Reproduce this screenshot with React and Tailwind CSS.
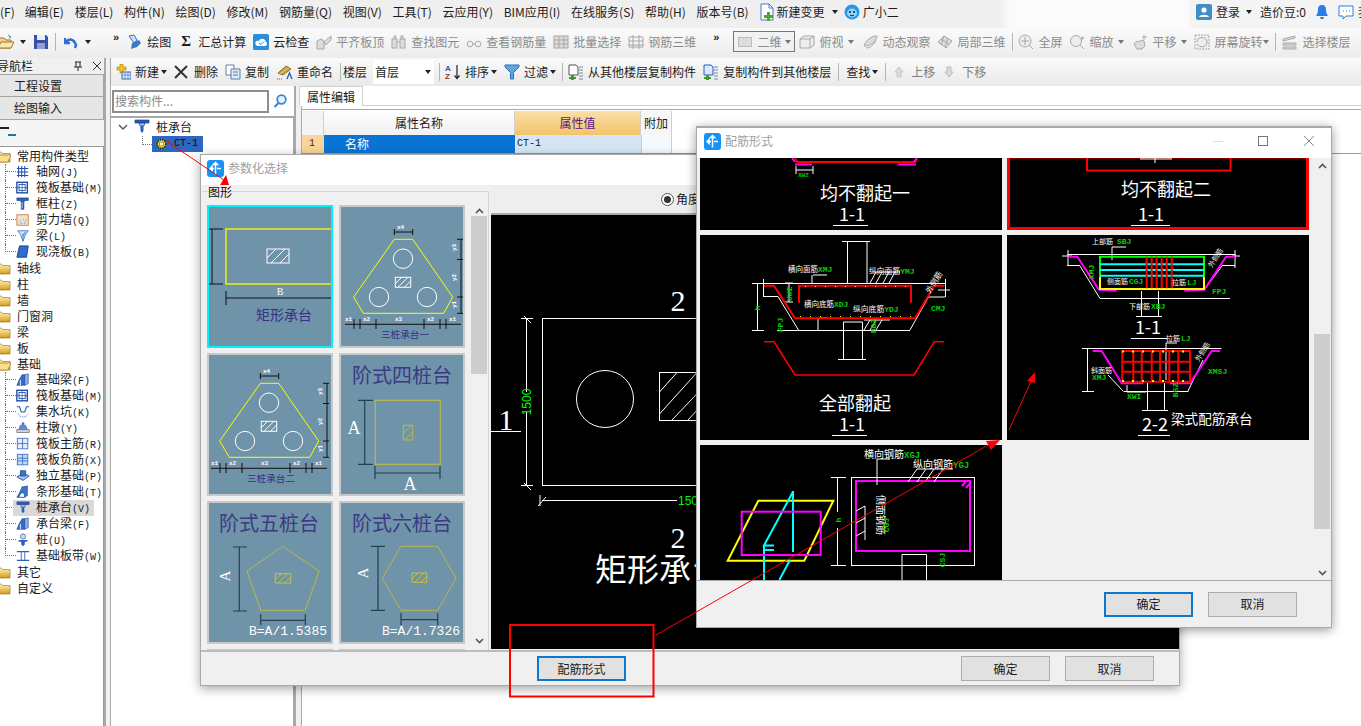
import React from "react";

const B = "#1f4fa8";
const Ico = ({ w = 16, h = 16, vb, children, className = "" }) => (
  <svg width={w} height={h} viewBox={vb || `0 0 ${w} ${h}`} className={`shrink-0 ${className}`}>{children}</svg>
);

/* ---------- small tree icons ---------- */
const TreeIcons = {
  grid: <g stroke={B} strokeWidth="1.2" fill="none"><path d="M3 1v13M6.5 1v13M10 1v13M1 4h13M1 8h13M1 12h13" /></g>,
  raft: <g fill="none" stroke={B}><rect x="1" y="1.5" width="12" height="12" strokeWidth="1.6" /><rect x="3.5" y="4" width="7" height="7" strokeWidth="1" /><path d="M7 1.5v12M1 7.5h12" strokeWidth=".8" /></g>,
  col: <g><path d="M1 1h13v3H11l-2 1v9H6V5L4 4H1z" fill="#2a5fc0" stroke="#123a86" strokeWidth=".7" /><path d="M7 6v7" stroke="#bcd3f5" /></g>,
  wall: <g><rect x="1" y="2" width="13" height="12" fill="#e8e4dc" stroke="#d9762b" /><path d="M5 9h1M8 7h1M10 10h1M6 12h1M9 12h1M4 11h1M11 8h1" stroke="#777" /></g>,
  beam: <g fill="none" stroke="#3a78c8"><path d="M2 2h12l-3 4-3 8-3-8z" fill="#d6e6f9" /><path d="M8 5v9M11 3l-3 5" /></g>,
  slab: <path d="M4 1h10l-2 13H1z" fill="#2f6cd0" stroke="#133f8c" />,
  fbeam: <g><path d="M1 14l3-7 3-5h3v12z" fill="#2f6cd0" stroke="#133f8c" strokeWidth=".7" /><path d="M10 2l4-1v11l-4 2z" fill="#8eb5ea" stroke="#133f8c" strokeWidth=".7" /><path d="M5 14V8" stroke="#fff" /></g>,
  pit: <g fill="none" stroke="#2a5fc0"><path d="M1 2l3 0 2 6h4l2-6 3 0" strokeWidth="1.3" /><path d="M2 10c3 5 9 5 12 0" strokeWidth="1" strokeDasharray="1 1" /></g>,
  pier: <g><path d="M7 2h2v3h2l2 5H3l2-5h2z" fill="#5f8bd0" stroke="#2a4f8c" strokeWidth=".7" /><rect x="1" y="10" width="14" height="3" fill="#ddd" stroke="#777" /></g>,
  main: <g fill="none"><rect x="1.5" y="1.5" width="12" height="12" fill="#e6effa" stroke="#3a6fc8" /><path d="M2 7.5h11M7.5 2v11" stroke="#3a6fc8" /></g>,
  neg: <g fill="none"><rect x="1.5" y="1.5" width="12" height="12" fill="#c6daf4" stroke="#3a6fc8" /><path d="M2 6h11M2 9h11M7.5 2v11" stroke="#3a6fc8" /></g>,
  iso: <g><path d="M1 9l7-4 7 3-7 5z" fill="#a9c7ef" stroke="#1f4fa8" /><path d="M5 2h6v6H5z" fill="#3a78d0" stroke="#1f4fa8" /></g>,
  strip: <g><path d="M1 14l3-5 3-7h2l4-1v11l-3 2z" fill="#3a78d0" stroke="#133f8c" strokeWidth=".7" /><path d="M3 14l3-5h3l1 5z" fill="#fff" stroke="#133f8c" strokeWidth=".7" /></g>,
  cap: <g><path d="M1 1h14v3H1z" fill="#2a5fc0" stroke="#0f2f70" strokeWidth=".6" /><path d="M5 4h6l-1 3H6z" fill="#9dbdea" stroke="#0f2f70" strokeWidth=".6" /><path d="M6.5 7h3v5l-1.5 2-1.5-2z" fill="#2a5fc0" /></g>,
  pile: <g fill="#2a5fc0"><circle cx="8" cy="4" r="3" stroke="#0f2f70" strokeWidth=".6" fill="#c6daf4" /><path d="M3 8h10v2H3zM6 10h4v3l-2 2-2-2z" /></g>,
  band: <g fill="none" stroke="#2a5fc0"><path d="M1 3h14M1 13h14" strokeWidth="1.5" /><path d="M6 3v10M10 3v10" /></g>,
  gear: <g><circle cx="7" cy="7" r="4.6" fill="#ffe500" stroke="#222" strokeWidth="1.6" strokeDasharray="1.4 1" /><rect x="5" y="5" width="4" height="4" fill="#fff8c0" stroke="#555" strokeWidth=".6" /></g>,
};

const Mono = ({ children }) => <span className="font-['Liberation_Mono',monospace] text-[10px]">{children}</span>;

const Folder = ({ open }) => (
  <svg width="16" height="14" viewBox="0 0 16 14" className="shrink-0">
    <defs><linearGradient id="fg" x1="0" y1="0" x2="0" y2="1"><stop offset="0" stopColor="#fff3b8" /><stop offset="1" stopColor="#d99b14" /></linearGradient></defs>
    <path d="M0 3h6l1.5 1.5H15v8.5H0z" fill="url(#fg)" stroke="#8f6a1a" strokeWidth=".6" />
    {open && <path d="M3 6h13l-3 7H0z" fill="#fbe08a" stroke="#8f6a1a" strokeWidth=".6" />}
  </svg>
);

const FolderRow = ({ label, open }) => (
  <div className="flex items-center h-4 gap-[6px] ml-[-5px]"><Folder open={open} /><span>{label}</span></div>
);

const ChildRow = ({ icon, label, key_, last, hi }) => (
  <div className="flex h-4 ml-[5px]">
    <div className={`w-[11px] shrink-0 border-l border-dotted border-[#777] ${last ? "h-2 border-b" : "h-4"}`}>
      {!last && <div className="h-2 border-b border-dotted border-[#777]" />}
    </div>
    <div className={`flex items-center gap-[6px] ${hi ? "bg-[#d9d9d9] w-[81px] ml-[-3px] pl-[3px]" : ""}`}>
      <Ico w={14} h={14} vb="0 0 16 16">{TreeIcons[icon]}</Ico>
      <span className="whitespace-nowrap">{label}{key_ && <Mono>({key_})</Mono>}</span>
    </div>
  </div>
);

/* ---------- toolbar helpers ---------- */
const Caret = ({ className = "", color = "border-t-[#222]" }) => (
  <div className={`w-0 h-0 shrink-0 border-x-[3.5px] border-x-transparent border-t-[4px] ${color} ${className}`} />
);
const Sep = ({ className = "" }) => <div className={`w-px h-[18px] bg-[#b5b5b5] shrink-0 ${className}`} />;
const Tool = ({ icon, label, gray, className = "" }) => (
  <div className={`flex items-center gap-[4px] shrink-0 whitespace-nowrap ${gray ? "text-[#8b8b8b]" : "text-[#1d1d1d]"} ${className}`}>
    {icon}<span>{label}</span>
  </div>
);
const Gray = ({ d, w = 16, children }) => (
  <Ico w={w} h={16} vb={`0 0 ${w} 16`}>
    <g fill="#dcdcdc" stroke="#a8a8a8" strokeWidth="1">{d ? <path d={d} /> : children}</g>
  </Ico>
);
const Chevrons = ({ className = "" }) => <span className={`font-['Liberation_Sans',sans-serif] text-[11px] font-bold leading-none mt-[-8px] text-[#222] shrink-0 ${className}`}>»</span>;

const MenuBar = () => {
  const items = ["编辑(E)", "楼层(L)", "构件(N)", "绘图(D)", "修改(M)", "钢筋量(Q)", "视图(V)", "工具(T)", "云应用(Y)", "BIM应用(I)", "在线服务(S)", "帮助(H)", "版本号(B)"];
  return (
    <div className="h-7 pb-[5px] flex items-center bg-[linear-gradient(90deg,#efefef_0,#efefef_1000px,#fbfbfb_1010px,#fbfbfb_1188px,#f4f4f4_1190px)] whitespace-nowrap text-[#1c1c1c]">
      <span className="ml-[-24px]">文件(F)</span>
      <div className="flex gap-[10.7px] ml-[10px]">{items.map((t) => <span key={t}>{t}</span>)}</div>
      <Ico w={16} h={18} vb="0 0 16 18" className="ml-[10px]">
        <path d="M2 1h8l4 4v12H2z" fill="#fff" stroke="#3c7fc2" /><path d="M10 1v4h4" fill="none" stroke="#3c7fc2" />
        <path d="M8 9h3v3h3v3h-3v3H8v-3H5v-3h3z" fill="#4ea52f" />
      </Ico>
      <span className="ml-[2px]">新建变更</span>
      <Caret className="ml-[7px]" />
      <Ico w={16} h={16} className="ml-[6px]">
        <circle cx="8" cy="8" r="7.5" fill="#2a97e8" /><ellipse cx="8" cy="9" rx="5" ry="4.4" fill="#8fd3ff" />
        <circle cx="6" cy="8" r="1" fill="#124" /><circle cx="10" cy="8" r="1" fill="#124" /><path d="M6 11c1 1 3 1 4 0" stroke="#124" fill="none" />
      </Ico>
      <span className="ml-[3px]">广小二</span>
      <div className="flex-1" />
      <Ico w={16} h={16}>
        <rect width="16" height="16" rx="2" fill="#3f8fc6" /><circle cx="8" cy="6" r="2.6" fill="#fff" /><path d="M3 13c1-3 9-3 10 0z" fill="#fff" />
      </Ico>
      <span className="ml-[4px]">登录</span>
      <Caret className="ml-[6px]" />
      <span className="ml-[8px]">造价豆:0</span>
      <Ico w={12} h={16} className="ml-[10px]">
        <path d="M6 1c3 0 4 2 4 5 0 3 1 4 2 6H0c1-2 2-3 2-6 0-3 1-5 4-5z" fill="#2b7de9" /><path d="M4 13c0 3 4 3 4 0z" fill="#2b7de9" />
      </Ico>
      <Ico w={16} h={16} className="ml-[10px]">
        <path d="M1 2h14v10H8l-3 3v-3H1z" fill="#fff" stroke="#2b7de9" /><path d="M5 7h1M8 7h1M11 7h1" stroke="#2b7de9" />
      </Ico>
      <span className="ml-[4px] mr-[-9px]">我</span>
    </div>
  );
};

const Toolbar1 = () => (
  <div className="h-[30px] pb-[3px] flex items-center bg-[linear-gradient(#fbfbfb,#ececec)] overflow-hidden">
    <Ico w={16} h={16} className="ml-[-2px]">
      <path d="M0 4h6l2 2h5v8H0z" fill="#efd488" stroke="#9a7a2a" /><path d="M3 8h13l-3 6H0z" fill="#f9e8b0" stroke="#9a7a2a" /><path d="M10 1l3 2-2 1" fill="none" stroke="#3a8ad0" />
    </Ico>
    <Caret className="ml-[6px]" />
    <Ico w={14} h={14} vb="0 0 14 14" className="ml-[8px]">
      <path d="M0 0h12l2 2v12H0z" fill="#3a4fa8" /><rect x="3" y="0" width="8" height="5" fill="#e8edf8" /><rect x="3" y="8" width="8" height="6" fill="#8f9fd4" />
    </Ico>
    <Sep className="ml-[7px] h-6" />
    <Ico w={14} h={14} className="ml-[8px]">
      <path d="M1 3v5h5M2 7c3-4 8-3 10 3l-1 3" fill="none" stroke="#2b6fd0" strokeWidth="2.4" />
    </Ico>
    <Caret className="ml-[7px]" />
    <Chevrons className="ml-[22px]" />
    <div className="ml-[8px] flex items-center gap-[7px]">
      <Tool icon={<Ico><path d="M2 2l5-1 3 5-3 3z" fill="#cfe0f5" stroke="#3a6fb0" /><path d="M5 9l7-3 2 3-4 4-6 2z" fill="#3a78c8" /></Ico>} label="绘图" />
      <Tool className="ml-[3px]" icon={<span className="w-[13px] font-['Liberation_Serif',serif] font-bold text-[15px] leading-none">Σ</span>} label="汇总计算" />
      <Tool icon={<Ico><rect width="16" height="16" rx="1.5" fill="#2d8fdc" /><path d="M3 11c-2-3 1-5 3-4 1-3 6-3 7 1 2 1 1 4-1 4H4z" fill="#fff" /><path d="M6 9l2 1.5 3-3" stroke="#2d8fdc" fill="none" /></Ico>} label="云检查" />
      <Tool gray icon={<Gray d="M1 15V7l4-2 3 2v8zM8 8l7-6v4l-5 5z" />} label="平齐板顶" />
      <Tool gray icon={<Gray><rect x="1" y="5" width="5" height="9" /><rect x="9" y="5" width="5" height="9" /><path d="M3 5V2h2v3M10 5V2h2v3M6 8h3" /></Gray>} label="查找图元" />
      <Tool gray icon={<Gray><circle cx="4" cy="10" r="2.8" fill="none" /><circle cx="12" cy="10" r="2.8" fill="none" /><path d="M7 10h2" /></Gray>} label="查看钢筋量" />
      <Tool gray icon={<Gray><rect x="1" y="2" width="14" height="12" /><path d="M1 6h14M1 10h14M6 2v12M11 2v12" fill="none" /></Gray>} label="批量选择" />
      <Tool gray icon={<Gray><path d="M1 3h14v10H1zM1 7h14M5 1v14M11 1v14M1 11h14" fill="none" /></Gray>} label="钢筋三维" />
    </div>
    <Chevrons className="ml-[17px]" />
    <div className="ml-[14px] w-[62px] h-[21px] border border-[#777] flex items-center pl-[2px] bg-[#f2f2f2] shrink-0">
      <div className="w-[14px] h-[10px] bg-[#dcdcdc] border border-[#bbb] ml-[2px]" />
      <span className="ml-[5px] text-[#8b8b8b]">二维</span>
      <Caret className="ml-[4px]" color="border-t-[#777]" />
    </div>
    <div className="ml-[4px] flex items-center">
      <Tool gray icon={<Gray><path d="M1 5l4-3h10v9l-4 3H1z" fill="#eee" /><path d="M1 5h10v9M11 5l4-3" fill="none" /></Gray>} label="俯视" />
      <Caret className="ml-[5px]" color="border-t-[#777]" />
      <Tool gray className="ml-[8px]" icon={<Gray><path d="M2 12C4 6 9 2 15 2c-1 6-6 10-13 10z" /><path d="M4 14c4 0 8-3 10-8" fill="none" /></Gray>} label="动态观察" />
      <Tool gray className="ml-[7px]" icon={<Gray><path d="M1 8l6-6 8 5-6 7zM4 5l8 5M7 2l-3 9M11 4l-3 9" /></Gray>} label="局部三维" />
      <Sep className="ml-[7px]" />
      <Tool gray className="ml-[5px]" icon={<Gray><circle cx="7" cy="7" r="6" fill="#eee" /><path d="M7 3v8M3 7h8M11 11l4 4" fill="none" /></Gray>} label="全屏" />
      <Tool gray className="ml-[7px]" icon={<Gray><circle cx="7" cy="7" r="5.5" fill="#eee" /><path d="M11 11l4 4M12 4h3M13.500 2.500v3" fill="none" /></Gray>} label="缩放" />
      <Caret className="ml-[5px]" color="border-t-[#777]" />
      <Tool gray className="ml-[8px]" icon={<Gray><path d="M2 10l3-3 2 1 2-2 3 1 1 5-3 3H5zM12 1v5M10 3h5" /></Gray>} label="平移" />
      <Caret className="ml-[5px]" color="border-t-[#777]" />
      <Tool gray className="ml-[7px]" icon={<Gray><rect x="1" y="1" width="14" height="14" fill="#eee" strokeDasharray="2 1" /><path d="M3 8c0-6 10-6 10 0M13 8c0 6-8 6-10 2" fill="none" /></Gray>} label="屏幕旋转" />
      <Caret className="ml-px" color="border-t-[#777]" />
      <Sep className="ml-[6px]" />
      <Tool gray className="ml-[6px]" icon={<Gray><path d="M1 5l12-3v2L1 7zM1 9h13v2H1zM1 13h13v2H1z" /></Gray>} label="选择楼层" />
    </div>
  </div>
);

const Toolbar2 = () => (
  <div className="h-7 flex items-center bg-[linear-gradient(#fafafa,#e9e9e9)] overflow-hidden pl-[4px] text-[#1d1d1d]">
    <Tool icon={<Ico><path d="M5 0h3v3h3v3H8v3H5V6H2V3h3z" fill="#f2c21a" stroke="#a07c10" strokeWidth=".6" /><rect x="7" y="8" width="9" height="7" fill="#dce8f6" stroke="#3a6fb0" /><path d="M7 11h9M10 8v7M13 8v7" stroke="#3a6fb0" strokeWidth=".6" /></Ico>} label="新建" />
    <Caret className="ml-[2px]" />
    <Tool className="ml-[7px]" icon={<Ico w={14} h={14}><path d="M1 1l12 12M13 1L1 13" stroke="#333" strokeWidth="2" /></Ico>} label="" />
    <span className="ml-[2px]">删除</span>
    <Tool className="ml-[7px]" icon={<Ico><path d="M1 1h8v10H1z" fill="#fff" stroke="#5f7fa8" /><path d="M6 5h9v10H6z" fill="#dce8f6" stroke="#5f7fa8" /><path d="M8 8h5M8 11h5" stroke="#5f7fa8" /></Ico>} label="复制" />
    <Tool className="ml-[7px]" icon={<Ico w={17} h={16}><path d="M2 9l8-7 5 3-8 6z" fill="#e5c46a" stroke="#8a6a20" /><path d="M4 8l8-5M6 10l7-5" stroke="#8a6a20" strokeWidth=".7" /><path d="M11 15l2.500-6 2.500 6" fill="none" stroke="#2b5fb0" strokeWidth="1.4" /><path d="M1 15h6" stroke="#666" strokeDasharray="1 1" /></Ico>} label="重命名" />
    <Sep className="ml-[7px]" />
    <span className="ml-[2px]">楼层</span>
    <div className="ml-[6px] w-[61px] h-6 bg-white flex items-center justify-between pl-[2px] pr-[3px] shrink-0">
      <span>首层</span><Caret />
    </div>
    <Sep className="ml-[5px]" />
    <Tool className="ml-[5px]" icon={<Ico><text x="0" y="7" fontSize="8" fontFamily="Liberation Sans" fontWeight="700" fill="#2b5fb0">A</text><text x="0" y="15" fontSize="8" fontFamily="Liberation Sans" fontWeight="700" fill="#a03030">Z</text><path d="M12 1v13M9.500 11.500l2.500 3 2.500-3" fill="none" stroke="#222" strokeWidth="1.200" /></Ico>} label="排序" />
    <Caret className="ml-[2px]" />
    <Tool className="ml-[7px]" icon={<Ico><path d="M1 1h14v2L9.500 8.500V15h-3V8.500L1 3z" fill="#5fa8e8" stroke="#2b6fb0" /></Ico>} label="过滤" />
    <Caret className="ml-[2px]" />
    <Sep className="ml-[6px]" />
    <Tool className="ml-[5px]" icon={<Ico><path d="M1 1h7l2 2v8H1z" fill="#fff" stroke="#555" /><path d="M11 3h4M11 6h4M11 9h4M11 12h4M11 15h4" stroke="#6a8ab0" /><path d="M3 11h3v2h2v2H6v1H3v-1H1v-2h2z" fill="#3c9a2f" /></Ico>} label="从其他楼层复制构件" />
    <Tool className="ml-[7px]" icon={<Ico><path d="M1 1h7l2 2v8H1z" fill="#dce8ff" stroke="#2b5fb0" /><path d="M11 3h4M11 6h4M11 9h4M11 12h4M11 15h4" stroke="#6a8ab0" /><path d="M3 11h3v2h2v2H6v1H3v-1H1v-2h2z" fill="#3c9a2f" /></Ico>} label="复制构件到其他楼层" />
    <Sep className="ml-[7px]" />
    <span className="ml-[7px]">查找</span>
    <Caret className="ml-[2px]" />
    <Sep className="ml-[7px]" />
    <Ico w={10} h={12} className="ml-[8px]"><path d="M5 1l4 5H7v5H3V6H1z" fill="#dcdcdc" stroke="#c4c4c4" /></Ico>
    <span className="ml-[7px] text-[#7d7d7d]">上移</span>
    <Ico w={10} h={12} className="ml-[9px]"><path d="M5 11l4-5H7V1H3v5H1z" fill="#dcdcdc" stroke="#bbb" /></Ico>
    <span className="ml-[8px] text-[#7d7d7d]">下移</span>
  </div>
);

const LeftNav = () => (
  <div className="w-[104px] shrink-0 flex flex-col bg-white overflow-hidden">
    <div className="h-4 flex items-center bg-[#f0f0f0] whitespace-nowrap">
      <span className="ml-[-3px] flex-1">导航栏</span>
      <Ico w={10} h={10} className="mr-[9px]"><path d="M2 1h6M3 1v5M7 1v5M1 6h8M5 6v4" stroke="#222" fill="none" /></Ico>
      <Ico w={10} h={10} className="mr-[2px]"><path d="M1 1l8 8M9 1L1 9" stroke="#333" fill="none" /></Ico>
    </div>
    <div className="h-[23px] bg-[#e6e6e6] border border-[#a4a4a4] border-l-0 flex items-center pl-[14px] shrink-0">工程设置</div>
    <div className="h-[23px] bg-[#e6e6e6] border border-[#a4a4a4] border-t-0 border-l-0 flex items-center pl-[14px] shrink-0">绘图输入</div>
    <div className="h-[26px] bg-[#f5f5f5] shrink-0 flex items-center pb-[2px]">
      <Ico w={16} h={12}><path d="M0 2h9" stroke="#222" strokeWidth="2" /><path d="M8 9h8" stroke="#167f86" strokeWidth="2" /></Ico>
    </div>
    <div className="flex-1 border-r border-t border-[#9a9a9a] pt-[1px]">
      <FolderRow label="常用构件类型" open />
      <ChildRow icon="grid" label="轴网" key_="J" />
      <ChildRow icon="raft" label="筏板基础" key_="M" />
      <ChildRow icon="col" label="框柱" key_="Z" />
      <ChildRow icon="wall" label="剪力墙" key_="Q" />
      <ChildRow icon="beam" label="梁" key_="L" />
      <ChildRow icon="slab" label="现浇板" key_="B" last />
      <FolderRow label="轴线" />
      <FolderRow label="柱" />
      <FolderRow label="墙" />
      <FolderRow label="门窗洞" />
      <FolderRow label="梁" />
      <FolderRow label="板" />
      <FolderRow label="基础" open />
      <ChildRow icon="fbeam" label="基础梁" key_="F" />
      <ChildRow icon="raft" label="筏板基础" key_="M" />
      <ChildRow icon="pit" label="集水坑" key_="K" />
      <ChildRow icon="pier" label="柱墩" key_="Y" />
      <ChildRow icon="main" label="筏板主筋" key_="R" />
      <ChildRow icon="neg" label="筏板负筋" key_="X" />
      <ChildRow icon="iso" label="独立基础" key_="P" />
      <ChildRow icon="strip" label="条形基础" key_="T" />
      <ChildRow icon="cap" label="桩承台" key_="V" hi />
      <ChildRow icon="fbeam" label="承台梁" key_="F" />
      <ChildRow icon="pile" label="桩" key_="U" />
      <ChildRow icon="band" label="基础板带" key_="W" last />
      <FolderRow label="其它" />
      <FolderRow label="自定义" />
    </div>
  </div>
);

const Splitter = ({ className = "" }) => <div className={`shrink-0 bg-[#f0f0f0] border-l-2 border-r border-[#a9a9a9] ${className}`} />;

const TreePane = () => (
  <div className="w-[183px] shrink-0 flex flex-col">
    <div className="h-[30px] flex items-center pl-px shrink-0">
      <div className="w-[157px] h-[23px] border-2 border-[#8d8d8d] bg-white flex items-center pl-[1px] text-[#8a8a8a]">搜索构件...</div>
      <Ico w={14} h={14} className="ml-[4px]"><circle cx="8.500" cy="5.500" r="4.300" fill="#e6f2fc" stroke="#2e8bd6" strokeWidth="1.800" /><path d="M5.500 9l-4 4" stroke="#2e8bd6" strokeWidth="2.200" /></Ico>
    </div>
    <div className="flex-1 border-t-2 border-r border-[#a9a9a9] pt-[1px]">
      <div className="flex items-center h-4 pl-[7px]">
        <Ico w={10} h={10}><path d="M1 3l4 4 4-4" fill="none" stroke="#555" strokeWidth="1.400" /></Ico>
        <Ico className="ml-[6px]">{TreeIcons.cap}</Ico>
        <span className="ml-[6px]">桩承台</span>
      </div>
      <div className="flex h-4 mt-px">
        <div className="w-[12px] ml-[31px] h-[9px] border-l border-b border-dotted border-[#777]" />
        <div className="w-[51px] ml-[-2px] bg-[#2f66bf] flex items-center pl-[3px]">
          <Ico w={13} h={14} vb="0 0 14 14">{TreeIcons.gear}</Ico>
          <span className="ml-[6px] font-['Liberation_Mono',monospace] text-[10px] text-[#0a0a0a]">CT-1</span>
        </div>
      </div>
    </div>
  </div>
);

const PropPane = () => (
  <div className="flex-1 min-w-0 flex flex-col">
    <div className="h-[20px] flex items-end border-b border-[#cfcfcf] shrink-0">
      <div className="w-[64px] h-[20px] ml-[-3px] border border-b-0 border-[#cfcfcf] bg-white flex items-center justify-center mb-[-1px]">属性编辑</div>
    </div>
    <div className="h-[4px] shrink-0 border-b border-[#a9a9a9]" />
    <div className="mt-px">
      <div className="flex h-6">
        <div className="w-[22px] bg-[#f4f4f4] border-r border-[#d0d0d0]" />
        <div className="w-[191px] bg-[linear-gradient(#fefefe,#f0f0f0)] flex items-center justify-center border-r border-[#d0d0d0]">属性名称</div>
        <div className="w-[126px] bg-[linear-gradient(#fadfa8,#f4c36a)] flex items-center justify-center text-[#5a1485] border-r border-[#d0d0d0]">属性值</div>
        <div className="w-[31px] bg-[#f6f6f6] flex items-center justify-center border-r border-[#d0d0d0]">附加</div>
      </div>
      <div className="flex h-[19px] border-b border-[#999]">
        <div className="w-[22px] bg-[#f7d69b] flex items-center justify-center pr-[2px]"><span className="font-['Liberation_Mono',monospace] text-[10px] text-[#7a1010]">1</span></div>
        <div className="w-[191px] bg-[#0a74d4] text-white flex items-center pl-[21px]">名称</div>
        <div className="w-[126px] bg-[#d4e6f5] flex items-center pl-[2px] font-['Liberation_Mono',monospace] text-[10px]">CT-1</div>
        <div className="w-[31px] bg-[#f4f9fd] border-x border-[#ccc]" />
      </div>
    </div>
  </div>
);

/* ---------- dialogs ---------- */
const AppGlyph = () => (
  <Ico w={17} h={17}>
    <rect width="17" height="17" rx="3" fill="#1693f4" />
    <path d="M8.500 2.500v12M3 8.500h4M10 8.500h4M8.500 2.500l-2 2h4zM3 8.500l2-2v4z" stroke="#fff" strokeWidth="1.500" fill="#fff" />
  </Ico>
);

const TitleBar = ({ title, controls, pad }) => (
  <div className={`h-[30px] pb-[4px] bg-white flex items-center ${pad} shrink-0`}>
    <AppGlyph />
    <span className="ml-[4px] text-[#a0a0a0]">{title}</span>
    {controls && (
      <>
        <div className="flex-1" />
        <div className="w-[10px] h-px bg-[#dedede]" />
        <div className="w-[10px] h-[10px] border border-[#777] ml-[35px]" />
        <Ico w={10} h={10} className="ml-[36px] mr-[17px]"><path d="M0 0l10 10M10 0L0 10" stroke="#888" fill="none" /></Ico>
      </>
    )}
  </div>
);

const Btn = ({ children, primary, className = "" }) => (
  <div className={`w-[89px] h-[25px] flex items-center justify-center bg-[#e1e1e1] border ${primary ? "border-2 border-[#0d78d0]" : "border-[#adadad]"} ${className}`}>{children}</div>
);

const ThumbBox = ({ children, selected }) => (
  <div className={`w-[126px] h-[143px] border-2 ${selected ? "border-[#00f2ff]" : "border-[#c9c9c9]"}`}>
    <svg viewBox="0 0 122 139" width="122" height="139" className="bg-[#6f93a9] block overflow-hidden">{children}</svg>
  </div>
);

const Hatch = ({ x, y, w, h, stroke = "#fff", n = 3 }) => (
  <g>
    <svg x={x} y={y} width={w} height={h} viewBox={`0 0 ${w} ${h}`} overflow="hidden">
      {Array.from({ length: n + 2 }).map((_, i) => {
        const d = ((w + h) / (n + 1)) * i;
        return <path key={i} d={`M${d - h} ${h}L${d} 0`} stroke={stroke} />;
      })}
    </svg>
    <rect x={x} y={y} width={w} height={h} stroke={stroke} fill="none" />
  </g>
);
const tT = "#362f85";

const Thumb3Pile = ({ label, dx = 0, dy = 0, lx = 64, ly = 127 }) => (
  <>
    <g transform={`translate(${dx} ${dy})`}>
      <path d="M53.300 32.300H71.700L111.700 90 102.700 106.300H22.300L12.700 90Z" fill="none" stroke="#ffff00" />
      <g fill="none" stroke="#fff"><circle cx="62" cy="51.700" r="9.700" /><circle cx="38" cy="90" r="9.700" /><circle cx="86" cy="90" r="9.700" /></g>
      <Hatch x={54.300} y={70.300} w={15.400} h={10} />
      <g stroke="#111" fill="none">
        <path d="M53.300 25H71.700M53.300 22V28M71.700 22V28M120 32.300V106.300M116 32.300H122M116 52.500H122M116 90H122M116 106.300H122M4 117.300H120" />
        <path d="M13 112V122M19 112V122M35 112V122M83 112V122M99 112V122M105 112V122" />
      </g>
      <g className="font-['Liberation_Mono',monospace]" fontSize="6" fontWeight="700" fill="#fff">
        <text x="56" y="22">x4</text><text x="4" y="114">x1</text><text x="22" y="114">x2</text><text x="54" y="114">x3</text><text x="86" y="114">x2</text><text x="108" y="114">x1</text>
        <text transform="translate(115 44) rotate(-90)">y3</text><text transform="translate(115 74) rotate(-90)">y2</text><text transform="translate(115 101) rotate(-90)">y1</text>
      </g>
    </g>
    <text x={lx} y={ly + 4} fontSize="9.600" textAnchor="middle" fill={tT}>{label}</text>
  </>
);

const Dim = ({ d, c = "#24404f" }) => <path d={d} stroke={c} strokeWidth="1.200" fill="none" />;

const Thumbs = () => (
  <div className="grid grid-cols-[126px_126px] gap-x-[6px] gap-y-[5px]">
    <ThumbBox selected>
      <rect x="17" y="22" width="120" height="55" fill="none" stroke="#ffff00" strokeWidth="1.300" />
      <Hatch x={58} y={42} w={22} h={14} />
      <path d="M3 22V77M0 22H14M0 77H14M17 91H122M17 84V98" stroke="#111" fill="none" />
      <text x="71" y="88" fontSize="10" fill="#fff" fontFamily="Liberation Serif" textAnchor="middle">B</text>
      <text x="75" y="113" fontSize="14" fill={tT} textAnchor="middle">矩形承台</text>
    </ThumbBox>
    <ThumbBox><Thumb3Pile label="三桩承台一" /></ThumbBox>
    <ThumbBox><Thumb3Pile label="三桩承台二" dx={-2} dy={-4} lx={62} ly={123} /></ThumbBox>
    <ThumbBox>
      <text x="61" y="28" fontSize="20" fill="#3c3a84" textAnchor="middle">阶式四桩台</text>
      <rect x="34.300" y="45.300" width="65" height="64" fill="none" stroke="#b9b84c" strokeWidth="1.200" />
      <Hatch x={62.300} y={70.300} w={9.400} h={14.700} stroke="#b9b84c" n={2} />
      <Dim d="M23.700 46V109M17 45.300H32M17 109.300H32M34 118H99M34 111V124M99 111V124" />
      <text x="13" y="79" fontSize="18" fill="#fff" textAnchor="middle" fontFamily="Liberation Serif">A</text>
      <text x="69" y="135" fontSize="18" fill="#fff" textAnchor="middle" fontFamily="Liberation Serif">A</text>
    </ThumbBox>
    <ThumbBox>
      <text x="60" y="28" fontSize="20" fill="#3c3a84" textAnchor="middle">阶式五桩台</text>
      <path d="M73.700 43.300L110 68 96.300 107.300H51.700L38 68Z" fill="none" stroke="#b9b84c" />
      <Hatch x={66.300} y={70.700} w={15.400} h={9.300} stroke="#c2c24c" />
      <Dim d="M30.300 44V108M24 44H38M24 108H38M51.700 117.300H96.300M51.700 111V122M96.300 111V122" />
      <text transform="translate(21 73) rotate(-90)" fontSize="15" fill="#fff" textAnchor="middle" fontFamily="Liberation Serif">A</text>
      <text x="40" y="132" fontSize="13" fill="#fff" className="font-['Liberation_Mono',monospace]">B=A/1.5385</text>
    </ThumbBox>
    <ThumbBox>
      <text x="61" y="28" fontSize="20" fill="#3c3a84" textAnchor="middle">阶式六桩台</text>
      <path d="M60 43.300H96.700L115 75.300 96.700 107.300H60L41.300 75.300Z" fill="none" stroke="#b9b84c" />
      <Hatch x={71} y={70} w={14.700} h={9.300} stroke="#c2c24c" />
      <Dim d="M37 44V107M30 43.300H44M30 107.300H44M60 116.700H96.700M60 110V122M96.700 110V122" />
      <text transform="translate(26.500 70) rotate(-90)" fontSize="15" fill="#fff" textAnchor="middle" fontFamily="Liberation Serif">A</text>
      <text x="41" y="132" fontSize="13" fill="#fff" className="font-['Liberation_Mono',monospace]">B=A/1.7326</text>
    </ThumbBox>
    <div className="h-[143px] w-[126px] border-2 border-[#c9c9c9] bg-[#6f93a9]" />
    <div className="h-[143px] w-[126px] border-2 border-[#c9c9c9] bg-[#6f93a9]" />
  </div>
);

const Preview = () => (
  <svg viewBox="491 215 689 434" width="689" height="434" className="block bg-black">
    <g fill="none" stroke="#fff">
      <rect x="542.500" y="318.500" width="280" height="167" />
      <circle cx="605" cy="399" r="28.500" />
      <rect x="659.500" y="372.500" width="70" height="48" />
      <path d="M659.500 392L677 372.500M659.500 414L697 372.500M672 420L712 378M688 420L720 385" />
      <path d="M526.500 318V392M526.500 412V485M521 318.500H533M521 485.500H533M524 316L531 323M524 483L531 490" />
      <path d="M491 431.500H521M542 500.500H677M540 495V506M538 506L546 497" />
    </g>
    <text transform="translate(531 402) rotate(-90)" fontSize="12" fill="#00ff00" textAnchor="middle" fontFamily="Liberation Sans">1500</text>
    <text x="678" y="505" fontSize="12" fill="#00ff00" fontFamily="Liberation Sans">1500</text>
    <text x="678" y="311" fontSize="30" fill="#fff" textAnchor="middle" fontFamily="Liberation Serif">2</text>
    <text x="678" y="548" fontSize="30" fill="#fff" textAnchor="middle" fontFamily="Liberation Serif">2</text>
    <text x="506" y="430" fontSize="30" fill="#fff" textAnchor="middle" fontFamily="Liberation Serif">1</text>
    <text x="595" y="581" fontSize="32" fill="#fff">矩形承台</text>
  </svg>
);

const Lbl = ({ x, y, t, g, gx, fs = 7 }) => (
  <>
    <text x={x} y={y + 3} fontSize={fs} fill="#fff">{t}</text>
    {g && <text x={gx ?? x + t.length * fs} y={y + 3} fontSize="8" fontWeight="700" fill="#00d000" className="font-['Liberation_Mono',monospace]">{g}</text>}
  </>
);
const Gr = ({ x, y, t, r }) => (
  <text transform={`translate(${x} ${y})${r ? " rotate(-90)" : ""}`} fontSize="8" fontWeight="700" fill="#00d000" textAnchor="middle" className="font-['Liberation_Mono',monospace]">{t}</text>
);

const Caption = ({ cx, y, t, sub, ucx, ux1, ux2, uy }) => (
  <>
    <text x={cx} y={y + 6} fontSize="18" fill="#fff" textAnchor="middle">{t}</text>
    <text x={ucx} y={uy - 4} fontSize="18" fill="#fff" textAnchor="middle">{sub}</text>
    <path d={`M${ux1} ${uy + 0.5}H${ux2}`} stroke="#fff" />
  </>
);

const Cells = () => (
  <div className="grid grid-cols-[302px_302px] gap-x-[5px] gap-y-[5px]">
    <svg viewBox="700 158 302 72" width="302" height="72" className="block bg-black">
      <path d="M795 158L797 162H915L917 158" fill="none" stroke="#ff0000" strokeWidth="2" />
      <path d="M792 158L795 162M917 158L914 162" stroke="#ff00ff" strokeWidth="2" />
      <path d="M795 164.500H812M898 164.500H916" stroke="#ff00ff" strokeWidth="2" />
      <path d="M796 170H813M796 166V174M813 166V174" stroke="#fff" />
      <text x="798" y="177" fontSize="6" fontWeight="700" fill="#00d000" className="font-['Liberation_Mono',monospace]">XWZ</text>
      <Caption cx={865} y={194} t="均不翻起一" sub="1-1" ucx={852} ux1={833} ux2={868} uy={225} />
    </svg>
    <svg viewBox="1007 158 302 72" width="302" height="72" className="block bg-black">
      <rect x="1008.500" y="157" width="299" height="71.500" fill="none" stroke="#ff0000" strokeWidth="3" />
      <path d="M1087 158V170.500H1230.500V158" fill="none" stroke="#ff0000" strokeWidth="2" />
      <path d="M1140 159H1172M1155 158V163" stroke="#fff" />
      <Caption cx={1166} y={190} t="均不翻起二" sub="1-1" ucx={1151} ux1={1131} ux2={1170} uy={225} />
    </svg>

    <svg viewBox="700 235 302 205" width="302" height="205" className="block bg-black">
      <g fill="none" stroke="#fff">
        <path d="M763.500 283.500H945.500M847.500 241.500V283M867 241.500V283M842 241.500H870" />
        <path d="M777 330.500H910M763 296.500H778L798.500 330M945 297H928.500L910 330" />
        <path d="M843.500 322H862.500M843.500 322V359M862.500 322V359M838 359.500H866" />
        <path d="M757.500 283V330.500M752 283.500H764M752 330.500H764M763.500 279V296M945.500 279V297M938 290H950" />
        <path d="M813 275H827M812 275V283M870 283L876 272M876 283L882 272M883 283L889 272M889 283L895 272M876 272H900" />
        <path d="M819 318H828M818 318V330M864 330L870 320M870 330L876 320M876 330L882 320M864 320H890" />
        <path d="M789 283V302M785 283H793M785 302H793" />
      </g>
      <g fill="none" stroke="#ff0000" strokeWidth="2">
        <path d="M764 285.700H774L795 318.300H915L934.300 285.700H944.300" />
        <path d="M799 302.700V285.700H911V302.700" />
        <path d="M764 341.700H774L795 375H914L934.300 341.700H944.300" strokeWidth="1.600" />
      </g>
      <path d="M800 316.500H915M805 286.500H909" stroke="#ffff00" strokeDasharray="1 9" fill="none" />
      <Lbl x={788} y={269} t="横向面筋" g="XMJ" fs={7.500} />
      <Lbl x={869} y={271} t="纵向面筋" g="YMJ" fs={7.800} />
      <Lbl x={804} y={304} t="横向底筋" g="XDJ" fs={7.500} />
      <Lbl x={853} y={309} t="纵向底筋" g="YDJ" fs={7.800} />
      <text x="931" y="311" fontSize="8" fontWeight="700" fill="#00d000" className="font-['Liberation_Mono',monospace]">CMJ</text>
      <Gr x={792} y={294} t="UWZ" r />
      <Gr x={760} y={308} t="h" r />
      <Gr x={783} y={325} t="FPJ" r />
      <Gr x={876} y={326} t="BBZ" r />
      <text transform="translate(930 294) rotate(-58)" fontSize="8" fill="#fff">外侧筋</text>
      <Caption cx={855} y={404} t="全部翻起" sub="1-1" ucx={852} ux1={832} ux2={867} uy={435} />
    </svg>

    <svg viewBox="1007 235 302 205" width="302" height="205" className="block bg-black">
      <g fill="none" stroke="#fff">
        <path d="M1067.500 254.500H1235.500M1068 250V266M1235 250V268M1062 256H1072M1232 256H1240M1067 265.500H1080M1222 265.500H1235" />
        <path d="M1080 266L1100 298.500H1230M1204 290L1222 266" />
        <path d="M1141.500 291V316M1158.500 291V316M1136 316.500H1162" />
        <path d="M1112 247H1126M1112 247V260" />
        <path d="M1092.500 348.500H1221.500M1087.500 348V391.500M1082 348.500H1094M1082 391.500H1094M1123.500 391.500H1188.500" />
        <path d="M1108 375L1123 391M1203 360L1188 391" />
        <path d="M1147.500 383V410M1164.500 383V410M1142 410.500H1168M1166 343V380M1166 343H1177M1127 385V392H1146" />
        <path d="M1131 338.500H1167" />
      </g>
      <g fill="none" strokeWidth="2">
        <path d="M1068.300 256.700H1077.300L1099 289.700 1116.700 290.700M1235 256.700H1226L1204.300 289.700 1184.300 290.700M1092.700 351H1101.700L1121.700 383.300H1143.300M1220 351H1211.700L1190 383.300H1170" stroke="#ff00ff" />
        <path d="M1100 276.700V256.700H1204V276.700" stroke="#00ff00" />
        <path d="M1100 276.700V289H1204V276.700" stroke="#ffff00" />
        <path d="M1100 264.300H1204M1100 270H1204M1100 275.700H1204" stroke="#00ffff" />
        <path d="M1146.700 256.700V288.300M1151.700 256.700V288.300M1156.700 256.700V288.300M1161.700 256.700V288.300M1166.700 256.700V288.300M1171.700 256.700V288.300" stroke="#ff0000" />
        <path d="M1122.300 351H1190V381.700H1122.300ZM1133.300 351V381.700M1141.700 351V381.700M1151.700 351V381.700M1160 351V381.700M1169.300 351V381.700M1178.300 351V381.700M1122.300 361.700H1190M1122.300 371.700H1190" stroke="#ff0000" />
      </g>
      <path d="M1122 351.500H1190M1122 381H1190" stroke="#ffff00" strokeDasharray="2 8" strokeWidth="2" fill="none" />
      <Lbl x={1092} y={241} t="上部筋" g="SBJ" gx={1117} />
      <Lbl x={1107} y={281} t="侧面筋" g="CGJ" gx={1129} />
      <Lbl x={1172} y={282} t="拉筋" g="LJ" gx={1187} />
      <Lbl x={1129} y={306} t="下部筋" g="XBJ" gx={1151} />
      <Lbl x={1166} y={338} t="拉筋" g="LJ" gx={1181} />
      <Lbl x={1091} y={370} t="斜面筋" />
      <text x="1092" y="380" fontSize="8" fontWeight="700" fill="#00d000" className="font-['Liberation_Mono',monospace]">XMJ</text>
      <text x="1208" y="374" fontSize="8" fontWeight="700" fill="#00d000" className="font-['Liberation_Mono',monospace]">XMSJ</text>
      <text x="1127" y="399" fontSize="8" fontWeight="700" fill="#00d000" className="font-['Liberation_Mono',monospace]">XWI</text>
      <text x="1212" y="294" fontSize="8" fontWeight="700" fill="#00d000" className="font-['Liberation_Mono',monospace]">FPJ</text>
      <Gr x={1094} y={272} t="XMJ" r />
      <Gr x={1178} y={390} t="BSZ" r />
      <text transform="translate(1212 268) rotate(-58)" fontSize="7" fill="#fff">外侧筋</text>
      <text transform="translate(1199 362) rotate(-58)" fontSize="7" fill="#fff">外侧筋</text>
      <text x="1148" y="334" fontSize="18" fill="#fff" textAnchor="middle">1-1</text>
      <text x="1155" y="431" fontSize="18" fill="#fff" textAnchor="middle">2-2</text>
      <path d="M1138 435.500H1170" stroke="#fff" />
      <text x="1171" y="424" fontSize="13.600" fill="#fff">梁式配筋承台</text>
    </svg>

    <svg viewBox="700 445 302 135" width="302" height="135" className="block bg-black">
      <g fill="none" strokeWidth="2">
        <path d="M758.300 500.700H833.300L804.300 560.700H727.700Z" stroke="#ffff00" />
        <path d="M793 491V552M793 491.700L763.300 546.700M764 546V580M790 560L779.300 580M764 545.500H774M764 550H774" stroke="#00ffff" />
        <rect x="741.700" y="511.700" width="79" height="43.300" stroke="#ff00ff" />
        <rect x="856" y="481" width="114" height="70" stroke="#ff00ff" />
        <path d="M971 482L966 488M967 480L962 486" stroke="#ff00ff" />
      </g>
      <g fill="none" stroke="#fff">
        <path d="M837.500 477V512M837.500 528V566M831 477.500H846M831 565.500H846" />
        <rect x="851.500" y="477.500" width="123" height="88" />
        <path d="M902 554.500H926.500M902 554.500V580M926.500 554.500V580" />
        <path d="M877 459H890M877 459V485M908 482L917 469M917 482L926 469M925 482L934 469M934 482L943 469M917 469H953" />
        <path d="M865 506V540M856 511L865 506M856 523L865 518M856 536L865 531" />
      </g>
      <text x="864" y="458" fontSize="10" fill="#fff">横向钢筋</text>
      <text x="904" y="458" fontSize="9" fontWeight="700" fill="#00d000" className="font-['Liberation_Mono',monospace]">XGJ</text>
      <text x="913" y="468" fontSize="10" fill="#fff">纵向钢筋</text>
      <text x="953" y="468" fontSize="9" fontWeight="700" fill="#00d000" className="font-['Liberation_Mono',monospace]">YGJ</text>
      <text transform="translate(877 515) rotate(90)" fontSize="10" fill="#fff" textAnchor="middle">侧面钢筋</text>
      <Gr x={889} y={525} t="CGJ" r />
      <Gr x={841} y={520} t="h" r />
      <Gr x={945} y={560} t="CSJ" r />
    </svg>
  </div>
);

const Dialog1 = () => (
  <div className="absolute left-[200px] top-[154px] w-[980px] h-[532px] flex flex-col border border-[#a9a9a9] bg-[#f0f0f0] shadow-[0_3px_10px_rgba(0,0,0,0.35)]">
    <TitleBar title="参数化选择" pad="pl-[6px]" />
    <div className="h-[465px] flex overflow-hidden">
      <div className="w-[289px] shrink-0 pt-[6px] pl-[1px] overflow-hidden">
        <div className="border-t border-r border-[#d5d5d5] w-[287px] h-[470px] flex flex-col">
          <span className="block w-fit ml-[6px] mt-[-7px] leading-[13px] text-[#111]">图形</span>
          <div className="flex ml-[5px] mt-[7px]">
            <Thumbs />
            <div className="ml-[6px] w-[16px] shrink-0 h-[444px] flex flex-col items-center bg-[#f0f0f0] mt-[-1px]">
              <Ico w={9} h={7} className="mt-[4px] mb-[2px]"><path d="M1 5l3.500-3.500L8 5" fill="none" stroke="#555" strokeWidth="1.600" /></Ico>
              <div className="w-full h-[158px] bg-[#cdcdcd] mt-[-1px]" />
              <div className="flex-1" />
              <Ico w={9} h={7} className="mb-[4px]"><path d="M1 2l3.500 3.500L8 2" fill="none" stroke="#555" strokeWidth="1.600" /></Ico>
            </div>
          </div>
        </div>
      </div>
      <div className="flex-1 flex flex-col border-l border-[#f0f0f0]">
        <div className="h-[30px] bg-[#eeeeee] border-b-2 border-[#a9a9a9] flex items-center pl-[170px] shrink-0 box-border">
          <div className="w-[13px] h-[13px] rounded-full border border-[#555] bg-white flex items-center justify-center">
            <div className="w-[7px] h-[7px] rounded-full bg-[#333]" />
          </div>
          <span className="ml-[2px] whitespace-nowrap">角度</span>
        </div>
        <Preview />
      </div>
    </div>
    <div className="flex-1 border-t-2 border-[#bdbdbd] flex items-center">
      <Btn primary className="ml-[336px]">配筋形式</Btn>
      <Btn className="ml-[335px]">确定</Btn>
      <Btn className="ml-[15px]">取消</Btn>
    </div>
  </div>
);

const Dialog2 = () => (
  <div className="absolute left-[696px] top-[126px] w-[636px] h-[502px] flex flex-col border border-[#a9a9a9] border-t-2 bg-[#f0f0f0] shadow-[0_2px_10px_rgba(0,0,0,0.4)]">
    <TitleBar title="配筋形式" pad="pl-[7px]" controls />
    <div className="h-[422px] flex shrink-0 overflow-hidden">
      <div className="pl-[3px] w-[617px] shrink-0"><Cells /></div>
      <div className="w-[16px] flex flex-col items-center">
        <Ico w={9} h={7} className="mt-[5px]"><path d="M1 5l3.500-3.500L8 5" fill="none" stroke="#555" strokeWidth="1.600" /></Ico>
        <div className="h-[165px]" />
        <div className="w-full h-[195px] bg-[#cdcdcd] mt-[-1px]" />
        <div className="flex-1" />
        <Ico w={9} h={7} className="mb-[4px]"><path d="M1 2l3.500 3.500L8 2" fill="none" stroke="#555" strokeWidth="1.600" /></Ico>
      </div>
    </div>
    <div className="flex-1 border-t border-[#a9a9a9] flex items-center">
      <Btn primary className="ml-[407px]">确定</Btn>
      <Btn className="ml-[15px]">取消</Btn>
    </div>
  </div>
);

const Annotations = () => (
  <svg viewBox="0 0 1361 726" width="1361" height="726" className="absolute left-0 top-0 pointer-events-none">
    <g fill="none" stroke="#ff0000">
      <path d="M165 140L224 180" />
      <path d="M656 635L990 444" />
      <path d="M1009 430L1032 379" />
      <rect x="510" y="625" width="143.500" height="71.500" strokeWidth="2" />
    </g>
    <g fill="#ff0000">
      <path d="M229 185L220 185L226 175Z" />
      <path d="M1000 440L986 441L991 450Z" />
      <path d="M1035 372L1027 381L1035 383Z" />
    </g>
  </svg>
);

export default function App() {
  return (
    <div className="relative w-[1361px] h-[726px] overflow-hidden bg-white text-[12px] leading-none text-[#1a1a1a] font-['Noto_Sans_CJK_SC',sans-serif]">
      <MenuBar />
      <Toolbar1 />
      <div className="flex h-[668px]">
        <LeftNav />
        <Splitter className="w-[7px]" />
        <div className="flex-1 min-w-0 flex flex-col">
          <Toolbar2 />
          <div className="flex flex-1 min-h-0">
            <TreePane />
            <Splitter className="w-[8px]" />
            <PropPane />
          </div>
        </div>
      </div>
      <Dialog1 />
      <Dialog2 />
      <Annotations />
    </div>
  );
}
